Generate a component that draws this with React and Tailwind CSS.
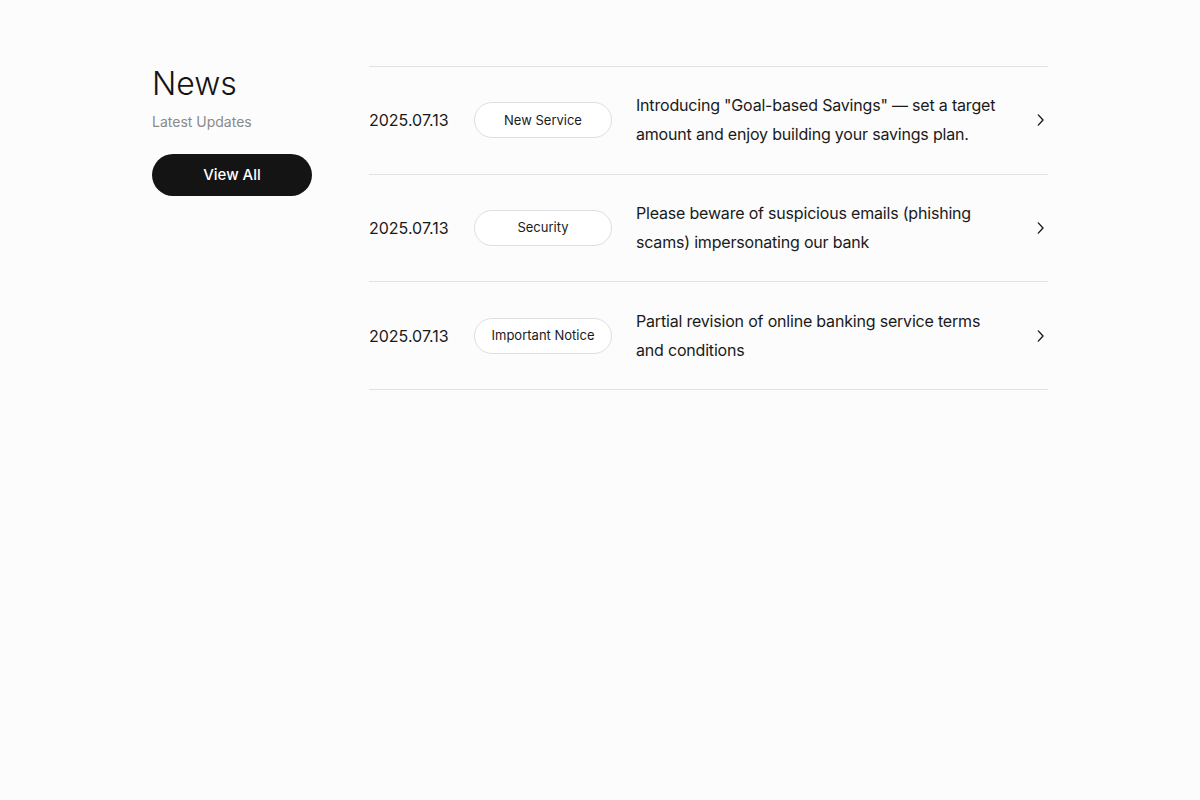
import React from "react";

const items = [
  {
    date: "2025.07.13",
    tag: "New Service",
    text: 'Introducing "Goal-based Savings" — set a target amount and enjoy building your savings plan.',
  },
  {
    date: "2025.07.13",
    tag: "Security",
    text: "Please beware of suspicious emails (phishing scams) impersonating our bank",
  },
  {
    date: "2025.07.13",
    tag: "Important Notice",
    text: "Partial revision of online banking service terms and conditions",
  },
];

function Chevron() {
  return (
    <svg width="16" height="16" viewBox="0 0 16 16" fill="none" className="shrink-0">
      <path d="M6.3 2.9L11 8L6.3 13.1" stroke="#1a1a1a" strokeWidth="1.4" strokeLinecap="round" strokeLinejoin="round" />
    </svg>
  );
}

export default function App() {
  return (
    <div className="min-h-[800px] w-full bg-[#fcfcfc] text-[#1a1a1a]" style={{ fontFamily: "Inter, 'Noto Sans', sans-serif" }}>
      <div className="mx-auto flex w-[896px] pt-[66px]">
        <div className="w-[217px] shrink-0">
          <h2 className="text-[32px] leading-[36px] font-light text-[#141414]">News</h2>
          <p className="mt-[10px] text-[14px] leading-[20px] text-[#8a8a8a]">Latest Updates</p>
          <button className="mt-[22px] flex h-[42px] w-[160px] items-center justify-center rounded-full bg-[#141414] text-[15px] font-medium text-white">
            View All
          </button>
        </div>
        <div className="flex-1 border-t border-[#e2e2e2]">
          {items.map((it, i) => (
            <div key={i} className="flex items-center border-b border-[#e2e2e2] py-[24.33px]">
              <div className="w-[105px] shrink-0 text-[16px] text-[#1a1a1a]">{it.date}</div>
              <div className="flex h-[36px] w-[138px] shrink-0 items-center justify-center rounded-full border border-[#dedede] bg-white text-[13px] text-[#1a1a1a]">
                {it.tag}
              </div>
              <div className="ml-[24px] w-[372px] text-[16px] leading-[29px] tracking-[-0.012em] text-[#1a1a1a]">{it.text}</div>
              <div className="ml-auto">
                <Chevron />
              </div>
            </div>
          ))}
        </div>
      </div>
    </div>
  );
}
